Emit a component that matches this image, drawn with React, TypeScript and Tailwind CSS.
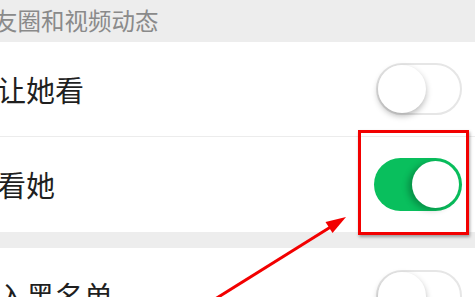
import React from 'react';

const font = { fontFamily: '"Noto Sans CJK SC", "Noto Sans", sans-serif' };

const Toggle = ({ on }: { on: boolean }) => {
  if (on) {
    return (
      <div className="relative h-[53px] w-[88px] rounded-full bg-[#09bf5d]">
        <div className="absolute right-[3px] top-[3px] h-[47px] w-[47px] rounded-full bg-white shadow-[-4px_2px_6px_rgba(0,0,0,0.25)]" />
      </div>
    );
  }
  return (
    <div className="relative h-[52px] w-[86px] rounded-full border-2 border-[#e6e6e6] bg-white">
      <div className="absolute left-0 top-0 h-[48px] w-[48px] rounded-full bg-white shadow-[0_3px_6px_rgba(0,0,0,0.28)]" />
    </div>
  );
};

const Row = ({ label, on, className = '' }: { label: string; on: boolean; className?: string }) => (
  <div className={`flex items-center justify-between bg-white pr-[13px] ${className}`}>
    <span className="-ml-[3px] text-[29px] leading-none text-[#1f1f1f]">{label}</span>
    <Toggle on={on} />
  </div>
);

const App = () => {
  return (
    <div className="relative h-[297px] w-[475px] overflow-hidden bg-white" style={font}>
      <div className="flex h-[42px] items-center bg-[#ededed]">
        <span className="-ml-[6px] text-[23.5px] leading-none text-[#8a8a8a]">友圈和视频动态</span>
      </div>
      <Row label="让她看" on={false} className="h-[94px]" />
      <div className="h-px bg-[#ececec]" />
      <Row label="看她" on={true} className="h-[95px]" />
      <div className="h-[16px] bg-[#ededed]" />
      <Row label="入黑名单" on={false} className="h-[95px]" />

      {/* annotation */}
      <div className="absolute left-[358px] top-[130px] h-[105px] w-[111px] border-[3px] border-[#f20000] shadow-[1px_2px_3px_rgba(0,0,0,0.35)]" />
      <svg className="absolute left-0 top-0" width="475" height="297" viewBox="0 0 475 297">
        <line x1="212" y1="301" x2="333" y2="225.5" stroke="#f20000" strokeWidth="3" />
        <polygon points="346,217 332.5,233 325.5,222" fill="#f20000" />
      </svg>
    </div>
  );
};

export default App;
